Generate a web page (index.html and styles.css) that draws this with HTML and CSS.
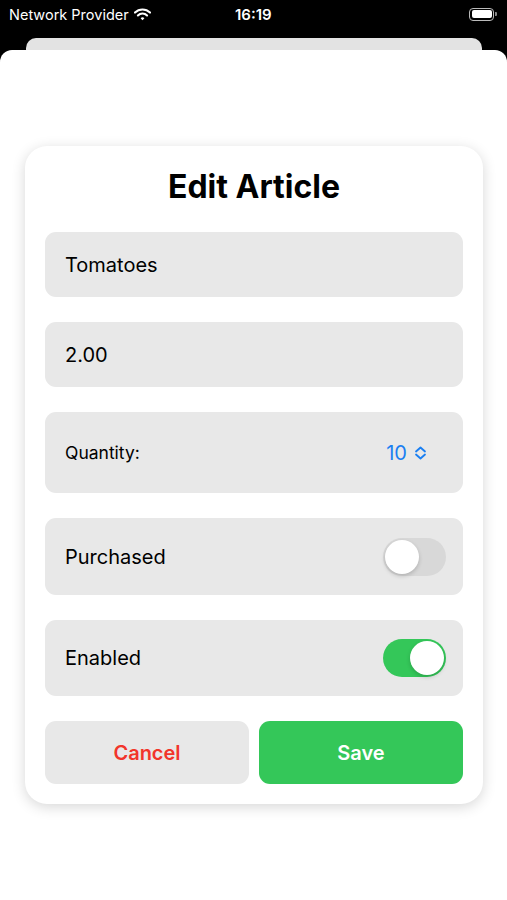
FILE: index.html
```html
<!DOCTYPE html>
<html lang="en">
<head>
  <meta charset="UTF-8" />
  <meta name="viewport" content="width=device-width, initial-scale=1" />
  <title>Edit Article</title>
  <link rel="stylesheet" href="styles.css">
</head>
<body>

  <div class="status-bar">
    <div class="carrier">
      Network Provider
      <svg class="wifi" width="17" height="13" viewBox="0 0 17 13">
        <path d="M1 4.6 A10.5 10.5 0 0 1 16 4.6" fill="none" stroke="white" stroke-width="2.1" stroke-linecap="round"/>
        <path d="M3.9 7.5 A6.4 6.4 0 0 1 13.1 7.5" fill="none" stroke="white" stroke-width="2.1" stroke-linecap="round"/>
        <path d="M6.6 10.2 L8.5 12.3 L10.4 10.2 A2.7 2.7 0 0 0 6.6 10.2 Z" fill="white"/>
      </svg>
    </div>
    <div class="time">16:19</div>
    <div class="battery">
      <span class="battery-body"><span class="battery-level"></span></span>
      <span class="battery-nub"></span>
    </div>
  </div>

  <div class="behind-sheet"></div>

  <div class="sheet">
    <div class="card">
      <h1>Edit Article</h1>

      <div class="field field-text">Tomatoes</div>
      <div class="field field-text">2.00</div>

      <div class="field field-row field-stepper">
        <span class="small-label">Quantity:</span>
        <span class="picker">
          10
          <svg width="13" height="14" viewBox="0 0 13 14">
            <path d="M2 5.5 L6.5 1.5 L11 5.5 M2 8.5 L6.5 12.5 L11 8.5" fill="none" stroke="#1a7ff2" stroke-width="1.8" stroke-linecap="round" stroke-linejoin="round"/>
          </svg>
        </span>
      </div>

      <div class="field field-row field-toggle">
        <span>Purchased</span>
        <span class="toggle"><span class="knob"></span></span>
      </div>

      <div class="field field-row field-toggle">
        <span>Enabled</span>
        <span class="toggle on"><span class="knob"></span></span>
      </div>

      <div class="buttons">
        <button class="btn btn-cancel">Cancel</button>
        <button class="btn btn-save">Save</button>
      </div>
    </div>
  </div>

</body>
</html>
```

FILE: styles.css
```css
body {
  margin: 0;
  background: #000;
  font-family: Inter, "Noto Sans", sans-serif;
  color: #000;
  height: 900px;
  overflow: hidden;
}
.status-bar {
  height: 28px;
  display: flex;
  align-items: center;
  padding: 0 10px 0 9px;
  color: white;
  font-size: 14.5px;
}
.carrier {
  display: flex;
  align-items: center;
  gap: 5px;
  width: 226px;
}
.time {
  font-weight: 600;
  font-size: 15px;
  flex: 1;
}
.battery {
  display: flex;
  align-items: center;
}
.battery-body {
  width: 25px;
  height: 13px;
  border: 1.5px solid #bbb;
  border-radius: 4px;
  padding: 1.5px;
  box-sizing: border-box;
  display: flex;
}
.battery-level {
  flex: 1;
  background: white;
  border-radius: 2px;
}
.battery-nub {
  width: 2px;
  height: 4px;
  background: #888;
  border-radius: 0 1px 1px 0;
  margin-left: 1px;
}
.behind-sheet {
  height: 12px;
  margin: 10px 25px 0 26px;
  background: #e3e3e3;
  border-radius: 10px 10px 0 0;
}
.sheet {
  background: white;
  border-radius: 12px 12px 0 0;
  height: 850px;
  padding: 96px 24px 0 25px;
  box-sizing: border-box;
}
.card {
  background: white;
  border-radius: 22px;
  box-shadow: 0 3px 14px rgba(0, 0, 0, 0.16);
  padding: 0 20px 20px;
  display: flex;
  flex-direction: column;
  gap: 25px;
}
h1 {
  margin: 0 0 -1px;
  padding-top: 20px;
  line-height: 42px;
  text-align: center;
  font-size: 32px;
  font-weight: 700;
}
.field {
  background: #e8e8e8;
  border-radius: 11px;
  padding: 0 20px;
  font-size: 20px;
  display: flex;
  align-items: center;
}
.field-text {
  height: 65px;
}
.field-row {
  justify-content: space-between;
}
.field-stepper {
  height: 81px;
  padding-right: 36px;
}
.small-label {
  font-size: 17.5px;
}
.picker {
  color: #1a7ff2;
  display: flex;
  align-items: center;
  gap: 7px;
  font-size: 20px;
}
.field-toggle {
  height: 77px;
  padding-right: 17px;
}
.field-toggle + .field-toggle {
  height: 76px;
}
.toggle {
  width: 63px;
  height: 38px;
  border-radius: 19px;
  background: #d8d8d8;
  padding: 2px;
  box-sizing: border-box;
  display: flex;
}
.toggle.on {
  background: #34c759;
  justify-content: flex-end;
}
.knob {
  width: 34px;
  height: 34px;
  border-radius: 50%;
  background: white;
  box-shadow: 0 2px 4px rgba(0, 0, 0, 0.18);
}
.buttons {
  display: flex;
  gap: 10px;
}
.btn {
  flex: 1;
  height: 63px;
  border: none;
  border-radius: 11px;
  font-family: Inter, "Noto Sans", sans-serif;
  font-size: 20px;
  font-weight: 600;
}
.btn-cancel {
  background: #e8e8e8;
  color: #f2352b;
}
.btn-save {
  background: #34c759;
  color: white;
}
```
